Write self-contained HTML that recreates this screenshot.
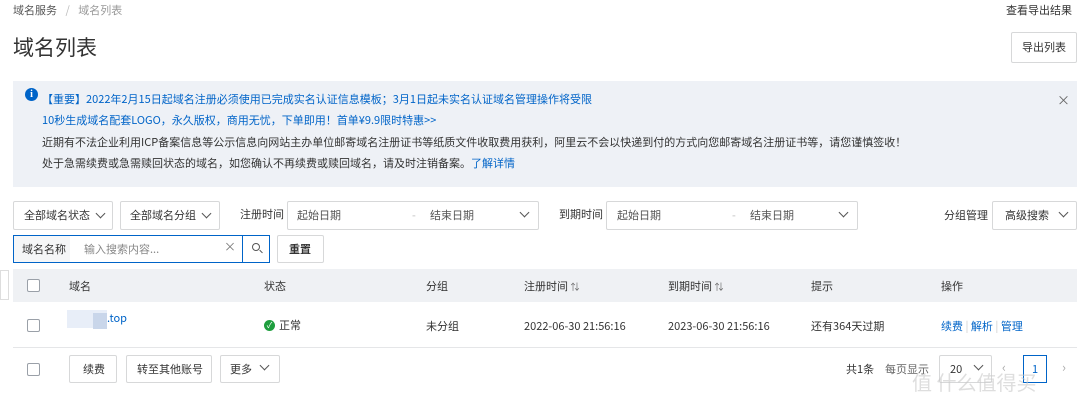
<!DOCTYPE html>
<html><head><meta charset="utf-8"><style>
*{box-sizing:border-box;margin:0;padding:0}
body{width:1080px;height:410px;background:#fff;font-family:"Noto Sans CJK SC","Liberation Sans",sans-serif;font-size:11px;line-height:16px;color:#333;position:relative;overflow:hidden}
.a{position:absolute;white-space:nowrap}
.box{position:absolute;border:1px solid #d7d8d9;background:#fff;border-radius:2px}
.chev{position:absolute;width:7px;height:7px;border-right:1.3px solid #555;border-bottom:1.3px solid #555;transform:rotate(45deg)}
.cb{position:absolute;width:13px;height:13px;border:1px solid #9aa0a8;border-radius:2px;background:#fff}
.blue{color:#0064c8}
</style></head><body>
<div class="a" style="left:13px;top:2px;color:#555">域名服务 <span style="color:#bbb;margin:0 6px">/</span> <span style="color:#999">域名列表</span></div>
<div class="a" style="left:1006px;top:2px;color:#333">查看导出结果</div>
<div class="a" style="left:13px;top:32px;font-size:21px;line-height:30px;color:#333">域名列表</div>
<div class="box" style="left:1011px;top:32px;width:66px;height:31px"></div>
<div class="a" style="left:1022px;top:39px">导出列表</div>

<div class="a" style="left:13px;top:81px;width:1064px;height:106px;background:#eef1f6"></div>
<div class="a" style="left:25px;top:88px;width:13px;height:13px;border-radius:50%;background:#0064c8;color:#fff;font-size:10px;font-weight:bold;text-align:center;line-height:13px;font-family:'Liberation Serif',serif">i</div>
<div class="a blue" style="left:42px;top:91px">【重要】2022年2月15日起域名注册必须使用已完成实名认证信息模板；3月1日起未实名认证域名管理操作将受限</div>
<div class="a blue" style="left:42px;top:112px">10秒生成域名配套LOGO，永久版权，商用无忧，下单即用！首单¥9.9限时特惠>></div>
<div class="a" style="left:42px;top:134px">近期有不法企业利用ICP备案信息等公示信息向网站主办单位邮寄域名注册证书等纸质文件收取费用获利，阿里云不会以快递到付的方式向您邮寄域名注册证书等，请您谨慎签收！</div>
<div class="a" style="left:42px;top:155px">处于急需续费或急需赎回状态的域名，如您确认不再续费或赎回域名，请及时注销备案。<span class="blue">了解详情</span></div>
<div class="a" style="left:1057px;top:92px;color:#666;font-size:13px">×</div>

<div class="box" style="left:13px;top:201px;width:100px;height:29px"></div><div class="a" style="left:24px;top:207px">全部域名状态</div><div class="chev" style="left:97px;top:210px"></div>
<div class="box" style="left:120px;top:201px;width:100px;height:29px"></div><div class="a" style="left:130px;top:207px">全部域名分组</div><div class="chev" style="left:203px;top:210px"></div>
<div class="a" style="left:240px;top:206px">注册时间</div>
<div class="box" style="left:287px;top:201px;width:252px;height:29px"></div><div class="a" style="left:297px;top:207px;color:#555">起始日期</div><div class="a" style="left:412px;top:207px;color:#bbb">-</div><div class="a" style="left:430px;top:207px;color:#555">结束日期</div><div class="chev" style="left:521px;top:209px"></div>
<div class="a" style="left:559px;top:206px">到期时间</div>
<div class="box" style="left:606px;top:201px;width:252px;height:29px"></div><div class="a" style="left:617px;top:207px;color:#555">起始日期</div><div class="a" style="left:732px;top:207px;color:#bbb">-</div><div class="a" style="left:750px;top:207px;color:#555">结束日期</div><div class="chev" style="left:840px;top:209px"></div>
<div class="a" style="left:944px;top:207px">分组管理</div>
<div class="box" style="left:992px;top:201px;width:85px;height:29px"></div><div class="a" style="left:1005px;top:207px">高级搜索</div><div class="chev" style="left:1060px;top:209px"></div>

<div class="a" style="left:13px;top:235px;width:230px;height:28px;border:1px solid #0064c8"></div>
<div class="a" style="left:14px;top:236px;width:56px;height:26px;background:#f5f6f7"></div>
<div class="a" style="left:22px;top:241px">域名名称</div>
<div class="a" style="left:84px;top:241px;color:#888">输入搜索内容...</div>
<div class="a" style="left:224px;top:239px;color:#777;font-size:12px">×</div>
<div class="a" style="left:242px;top:235px;width:28px;height:28px;border:1px solid #0064c8"></div>
<div class="a" style="left:252px;top:243px;width:8px;height:8px;border:1.2px solid #555;border-radius:50%"></div>
<div class="a" style="left:259px;top:251px;width:4px;height:1.2px;background:#555;transform:rotate(45deg)"></div>
<div class="box" style="left:277px;top:235px;width:47px;height:28px"></div><div class="a" style="left:289px;top:241px;font-weight:bold">重置</div>

<div class="a" style="left:13px;top:269px;width:1064px;height:33px;background:#eff1f4"></div>
<div class="a" style="left:0;top:270px;width:9px;height:30px;border:1px solid #ddd;background:#fff"></div>
<div class="cb" style="left:27px;top:279px"></div>
<div class="a" style="left:69px;top:278px">域名</div><div class="a" style="left:264px;top:278px">状态</div><div class="a" style="left:426px;top:278px">分组</div>
<div class="a" style="left:524px;top:278px">注册时间 <span style="font-size:9px;color:#666">⇅</span></div>
<div class="a" style="left:668px;top:278px">到期时间 <span style="font-size:9px;color:#666">⇅</span></div>
<div class="a" style="left:811px;top:278px">提示</div><div class="a" style="left:941px;top:278px">操作</div>

<div class="a" style="left:13px;top:347px;width:1064px;height:1px;background:#e5e6e8"></div>
<div class="cb" style="left:27px;top:319px"></div>
<div class="a" style="left:67px;top:310px;width:40px;height:18px;background:#e8eef8"></div>
<div class="a" style="left:93px;top:313px;width:14px;height:16px;background:#c9d6ea"></div>
<div class="a blue" style="left:107px;top:310px">.top</div>
<div class="a" style="left:264px;top:320px;width:11px;height:11px;border-radius:50%;background:#1e9e3e;color:#fff;font-size:8px;text-align:center;line-height:11px">✓</div>
<div class="a" style="left:279px;top:317px">正常</div>
<div class="a" style="left:426px;top:318px">未分组</div>
<div class="a" style="left:524px;top:318px">2022-06-30 21:56:16</div>
<div class="a" style="left:668px;top:318px">2023-06-30 21:56:16</div>
<div class="a" style="left:811px;top:318px">还有364天过期</div>
<div class="a blue" style="left:941px;top:318px">续费 <span style="color:#ccc">|</span> 解析 <span style="color:#ccc">|</span> 管理</div>

<div class="cb" style="left:27px;top:363px"></div>
<div class="box" style="left:69px;top:355px;width:48px;height:28px"></div><div class="a" style="left:83px;top:361px">续费</div>
<div class="box" style="left:126px;top:355px;width:86px;height:28px"></div><div class="a" style="left:137px;top:361px">转至其他账号</div>
<div class="box" style="left:220px;top:355px;width:60px;height:28px"></div><div class="a" style="left:230px;top:361px">更多</div><div class="chev" style="left:261px;top:362px"></div>
<div class="a" style="left:846px;top:361px">共1条</div>
<div class="a" style="left:885px;top:361px;color:#666">每页显示</div>
<div class="box" style="left:939px;top:355px;width:53px;height:28px"></div><div class="a" style="left:950px;top:361px">20</div><div class="chev" style="left:975px;top:362px"></div>
<div class="a" style="left:1002px;top:359px;color:#aaa;font-size:13px">‹</div>
<div class="a" style="left:1023px;top:355px;width:24px;height:28px;border:1px solid #0064c8"></div><div class="a blue" style="left:1032px;top:361px">1</div>
<div class="a" style="left:1062px;top:359px;color:#aaa;font-size:13px">›</div>
<div class="a" style="left:912px;top:368px;font-size:20px;line-height:28px;color:rgba(200,200,200,0.6)">值 什么值得买</div>
</body></html>
